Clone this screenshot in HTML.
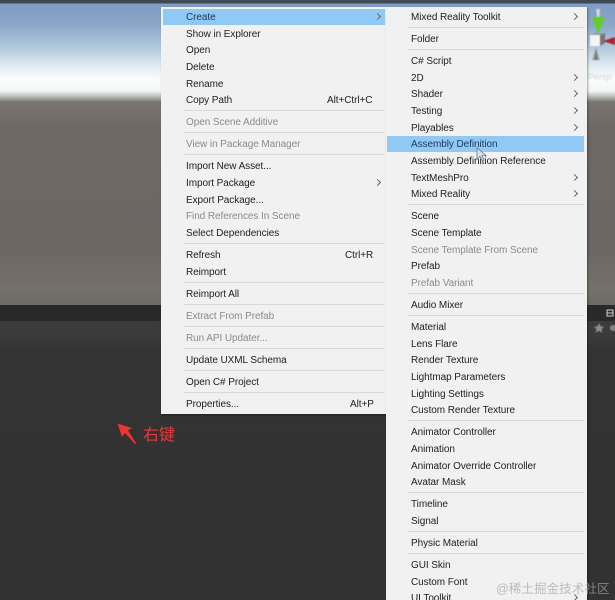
<!DOCTYPE html>
<html>
<head>
<meta charset="utf-8">
<style>
html,body{margin:0;padding:0;width:615px;height:600px;overflow:hidden;background:#323232}
#root{position:relative;width:615px;height:600px;overflow:hidden;font-family:"Liberation Sans",Arial,sans-serif;font-size:10px;color:#222}
.a{position:absolute}
.menu{position:absolute;background:#f1f1f1;box-shadow:1px 1px 2px rgba(0,0,0,.35)}
.t{position:absolute;white-space:nowrap;line-height:14px;height:14px;letter-spacing:-.07px;margin-top:2px;filter:blur(.3px)}
.d{color:#8b8b8b}
.sep{position:absolute;height:1px;background:#dadada}
.hl{position:absolute;background:#90c8f6}
.r{position:absolute;width:4px;height:4px;border-top:1px solid #666;border-right:1px solid #666;transform:rotate(45deg)}
</style>
</head>
<body>
<div id="root">
  <div class="a" style="left:0;top:0;width:615px;height:305px;background:linear-gradient(#3f4a55 0,#3f4a55 3px,#7f9dc2 4px,#8aa6c8 25px,#b9cde0 50px,#e6eff4 68px,#fbfdfd 80px,#f4f6f4 91px,#b5b8b2 97px,#7a7570 102px,#6e6865 130px,#6c6763 250px,#75716a 290px,#6d6a64 304px)"></div>
  <div class="a" style="left:0;top:305px;width:615px;height:16px;background:#292929"></div>
  <div class="a" style="left:0;top:321px;width:615px;height:15px;background:#3b3b3b"></div>
  <div class="a" style="left:0;top:336px;width:615px;height:264px;background:linear-gradient(#3a3a3a 0,#333 18px,#323232 100%)"></div>

  <!-- gizmo -->
  <svg class="a" style="left:587px;top:0;filter:blur(.4px)" width="28" height="70" viewBox="0 0 28 70">
    <path d="M5 17 L18 17 L11 34 Z" fill="#5fd021"/>
    <path d="M9 9 L13 9 L12.500 17 L10 17 Z" fill="#cfd8d0"/>
    <rect x="3" y="35" width="10" height="11" fill="#f4f4f4"/>
    <path d="M13 35 L18 33 L18 43 L13 46 Z" fill="#777"/>
    <path d="M3 35 L8 33 L18 33 L13 35 Z" fill="#999"/>
    <path d="M16 41 L28 37 L28 45 Z" fill="#b3202a"/>
    <path d="M9 47 L5 60 L13 60 Z" fill="#a5a5a5"/>
    <path d="M9 49 L7.500 60 L10.500 60 Z" fill="#6f6f6f"/>
  </svg>
  <div class="a" style="left:588px;top:72px;color:#9a9694;font-size:9px;opacity:.35;filter:blur(.5px)">Persp</div>
  <svg class="a" style="left:605px;top:306px" width="10" height="12"><path d="M2 4h6v6H2zM2 7h6" fill="none" stroke="#cfcfcf" stroke-width="1"/></svg>
  <svg class="a" style="left:593px;top:322px;filter:blur(.4px)" width="22" height="13"><path d="M6 1l1.600 3.400 3.600.4-2.700 2.500.8 3.700L6 8.800 2.700 10.600l.8-3.700L.8 4.800l3.600-.4z" fill="#8f8f8f"/><circle cx="20" cy="6" r="3" fill="#8a8a8a"/></svg>

  <!-- annotation -->
  <svg class="a" style="left:112px;top:418px" width="30" height="30"><path d="M5.500 5.500 L10 19 L13 15 L23 26 L24 25 L16 12.500 L20 10 Z" fill="#ec3434"/></svg>
  <div class="a" style="left:143px;top:427px;font-size:16px;line-height:18px;color:#e83a3a;font-family:'Liberation Sans','Noto Sans CJK SC',sans-serif">右键</div>

  <!-- left menu -->
  <div class="menu" style="left:161px;top:7px;width:225px;height:407px"></div>
  <div class="hl" style="left:163px;top:9px;width:222px;height:16px"></div>
  <div class="t" style="left:186px;top:9px;color:#1d3a5a">Create</div>
  <div class="r" style="left:375px;top:14px"></div>
  <div class="t" style="left:186px;top:26px">Show in Explorer</div>
  <div class="t" style="left:186px;top:42px">Open</div>
  <div class="t" style="left:186px;top:59px">Delete</div>
  <div class="t" style="left:186px;top:76px">Rename</div>
  <div class="t" style="left:186px;top:92px">Copy Path</div>
  <div class="t" style="left:327px;top:92px">Alt+Ctrl+C</div>
  <div class="sep" style="left:184px;top:110px;width:200px"></div>
  <div class="t d" style="left:186px;top:114px">Open Scene Additive</div>
  <div class="sep" style="left:184px;top:132px;width:200px"></div>
  <div class="t d" style="left:186px;top:136px">View in Package Manager</div>
  <div class="sep" style="left:184px;top:154px;width:200px"></div>
  <div class="t" style="left:186px;top:158px">Import New Asset...</div>
  <div class="t" style="left:186px;top:175px">Import Package</div>
  <div class="r" style="left:375px;top:180px"></div>
  <div class="t" style="left:186px;top:192px">Export Package...</div>
  <div class="t d" style="left:186px;top:208px">Find References In Scene</div>
  <div class="t" style="left:186px;top:225px">Select Dependencies</div>
  <div class="sep" style="left:184px;top:243px;width:200px"></div>
  <div class="t" style="left:186px;top:247px">Refresh</div>
  <div class="t" style="left:345px;top:247px">Ctrl+R</div>
  <div class="t" style="left:186px;top:264px">Reimport</div>
  <div class="sep" style="left:184px;top:282px;width:200px"></div>
  <div class="t" style="left:186px;top:286px">Reimport All</div>
  <div class="sep" style="left:184px;top:304px;width:200px"></div>
  <div class="t d" style="left:186px;top:308px">Extract From Prefab</div>
  <div class="sep" style="left:184px;top:326px;width:200px"></div>
  <div class="t d" style="left:186px;top:330px">Run API Updater...</div>
  <div class="sep" style="left:184px;top:348px;width:200px"></div>
  <div class="t" style="left:186px;top:352px">Update UXML Schema</div>
  <div class="sep" style="left:184px;top:370px;width:200px"></div>
  <div class="t" style="left:186px;top:374px">Open C# Project</div>
  <div class="sep" style="left:184px;top:392px;width:200px"></div>
  <div class="t" style="left:186px;top:396px">Properties...</div>
  <div class="t" style="left:350px;top:396px">Alt+P</div>

  <!-- right menu -->
  <div class="menu" style="left:386px;top:7px;width:201px;height:593px"></div>
  <div class="hl" style="left:387px;top:136px;width:197px;height:16px"></div>
  <div class="t" style="left:411px;top:9px">Mixed Reality Toolkit</div>
  <div class="r" style="left:572px;top:14px"></div>
  <div class="sep" style="left:408px;top:27px;width:176px"></div>
  <div class="t" style="left:411px;top:31px">Folder</div>
  <div class="sep" style="left:408px;top:49px;width:176px"></div>
  <div class="t" style="left:411px;top:53px">C# Script</div>
  <div class="t" style="left:411px;top:70px">2D</div>
  <div class="r" style="left:572px;top:75px"></div>
  <div class="t" style="left:411px;top:86px">Shader</div>
  <div class="r" style="left:572px;top:91px"></div>
  <div class="t" style="left:411px;top:103px">Testing</div>
  <div class="r" style="left:572px;top:108px"></div>
  <div class="t" style="left:411px;top:120px">Playables</div>
  <div class="r" style="left:572px;top:125px"></div>
  <div class="t" style="left:411px;top:136px;color:#1d3a5a">Assembly Definition</div>
  <div class="t" style="left:411px;top:153px">Assembly Definition Reference</div>
  <div class="t" style="left:411px;top:170px">TextMeshPro</div>
  <div class="r" style="left:572px;top:175px"></div>
  <div class="t" style="left:411px;top:186px">Mixed Reality</div>
  <div class="r" style="left:572px;top:191px"></div>
  <div class="sep" style="left:408px;top:204px;width:176px"></div>
  <div class="t" style="left:411px;top:208px">Scene</div>
  <div class="t" style="left:411px;top:225px">Scene Template</div>
  <div class="t d" style="left:411px;top:242px">Scene Template From Scene</div>
  <div class="t" style="left:411px;top:258px">Prefab</div>
  <div class="t d" style="left:411px;top:275px">Prefab Variant</div>
  <div class="sep" style="left:408px;top:293px;width:176px"></div>
  <div class="t" style="left:411px;top:297px">Audio Mixer</div>
  <div class="sep" style="left:408px;top:315px;width:176px"></div>
  <div class="t" style="left:411px;top:319px">Material</div>
  <div class="t" style="left:411px;top:336px">Lens Flare</div>
  <div class="t" style="left:411px;top:352px">Render Texture</div>
  <div class="t" style="left:411px;top:369px">Lightmap Parameters</div>
  <div class="t" style="left:411px;top:386px">Lighting Settings</div>
  <div class="t" style="left:411px;top:402px">Custom Render Texture</div>
  <div class="sep" style="left:408px;top:420px;width:176px"></div>
  <div class="t" style="left:411px;top:424px">Animator Controller</div>
  <div class="t" style="left:411px;top:441px">Animation</div>
  <div class="t" style="left:411px;top:458px">Animator Override Controller</div>
  <div class="t" style="left:411px;top:474px">Avatar Mask</div>
  <div class="sep" style="left:408px;top:492px;width:176px"></div>
  <div class="t" style="left:411px;top:496px">Timeline</div>
  <div class="t" style="left:411px;top:513px">Signal</div>
  <div class="sep" style="left:408px;top:531px;width:176px"></div>
  <div class="t" style="left:411px;top:535px">Physic Material</div>
  <div class="sep" style="left:408px;top:553px;width:176px"></div>
  <div class="t" style="left:411px;top:557px">GUI Skin</div>
  <div class="t" style="left:411px;top:574px">Custom Font</div>
  <div class="t" style="left:411px;top:590px">UI Toolkit</div>
  <div class="r" style="left:572px;top:595px"></div>

  <!-- cursor -->
  <svg class="a" style="left:476px;top:147px" width="12" height="16"><path d="M1 1 L1 12 L4 9.500 L6.500 14 L8 13 L6 8.500 L10 8.500 Z" fill="#d8e2ea" stroke="#6d7680" stroke-width=".8"/></svg>

  <!-- watermark -->
  <div class="a" style="left:496px;top:581px;font-size:12.600px;line-height:16px;white-space:nowrap;color:rgba(165,165,165,.7);font-family:'Liberation Sans','Noto Sans CJK SC',sans-serif">@稀土掘金技术社区</div>
</div>
</body>
</html>
